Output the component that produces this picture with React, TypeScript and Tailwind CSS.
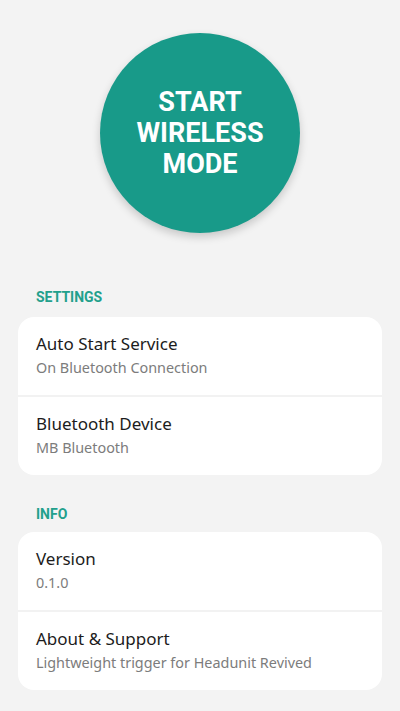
import React from "react";

function Row({ title, sub, divider }: { title: string; sub: string; divider?: boolean }) {
  return (
    <div className={`px-[18px] pt-[15px] pb-[17px] ${divider ? "border-b-2 border-[#f2f2f2]" : ""}`}>
      <div className="text-[17px] leading-[24px] text-[#1c1c1c]">{title}</div>
      <div className="mt-[2px] text-[14.4px] leading-[20px] text-[#7c7c7c]">{sub}</div>
    </div>
  );
}

export default function App() {
  return (
    <div className="min-h-[711px] w-[400px] bg-[#f3f3f3] font-['Noto_Sans',sans-serif]">
      <div className="flex justify-center pt-[33px]">
        <button className="flex h-[200px] w-[200px] items-center justify-center rounded-full bg-[#189a89] shadow-[0_4px_8px_rgba(0,0,0,0.18)]">
          <span className="text-center font-['Roboto',sans-serif] text-[27px] font-bold leading-[31px] text-white">
            START
            <br />
            WIRELESS
            <br />
            MODE
          </span>
        </button>
      </div>

      <div className="px-[18px] pt-[56px]">
        <div className="pl-[18px] font-['Roboto',sans-serif] text-[14px] font-bold leading-[16px] text-[#22a08c]">SETTINGS</div>
        <div className="mt-[12px] overflow-hidden rounded-[16px] bg-white">
          <Row title="Auto Start Service" sub="On Bluetooth Connection" divider />
          <Row title="Bluetooth Device" sub="MB Bluetooth" />
        </div>

        <div className="mt-[31px] pl-[18px] font-['Roboto',sans-serif] text-[14px] font-bold leading-[16px] text-[#22a08c]">INFO</div>
        <div className="mt-[10px] overflow-hidden rounded-[16px] bg-white">
          <Row title="Version" sub="0.1.0" divider />
          <Row title="About & Support" sub="Lightweight trigger for Headunit Revived" />
        </div>
      </div>
    </div>
  );
}
